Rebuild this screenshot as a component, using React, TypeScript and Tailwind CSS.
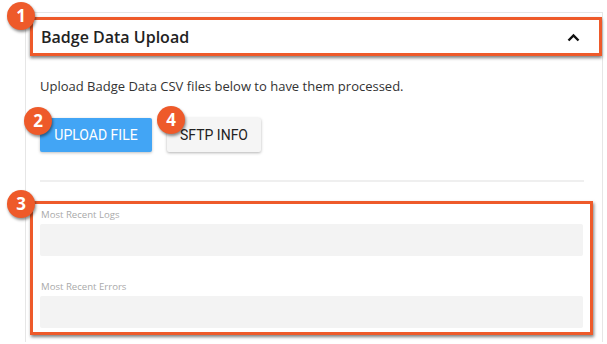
import React from 'react'

const Badge: React.FC<{ n: number; className: string }> = ({ n, className }) => (
  <div
    className={`absolute w-[28px] h-[28px] rounded-full bg-[#ee5a2a] text-white flex items-center justify-center text-[17px] font-bold shadow-[1px_2px_3px_rgba(0,0,0,0.45)] font-['Open_Sans',sans-serif] ${className}`}
  >
    {n}
  </div>
)

const LogField: React.FC<{ label: string; className?: string }> = ({ label, className }) => (
  <div className={className}>
    <div className="text-[9.6px] leading-[14px] text-[#aaaaaa] pl-[1px]">{label}</div>
    <div className="h-[32px] bg-[#f3f3f3] rounded-[2px] mt-[2px]" />
  </div>
)

export default function App() {
  return (
    <div className="relative w-[607px] h-[344px] bg-white overflow-hidden font-['Open_Sans',sans-serif]">
      <div className="ml-[25px] mt-[12px] w-[578px] h-[330px] border border-[#e6e6e6] border-b-0">
        {/* Header */}
        <div className="ml-[4px] mt-[4px] h-[39px] border-[3px] border-[#ee5a2a] shadow-[0_2px_3px_rgba(0,0,0,0.5)] flex items-center justify-between pl-[8px] pr-[19px]">
          <h1 className="text-[16px] font-semibold text-[#222]">Badge Data Upload</h1>
          <svg width="13" height="9" viewBox="0 0 13 9" className="mt-[1px]">
            <path d="M1.5 7.5 L6.5 2.5 L11.5 7.5" fill="none" stroke="#111" strokeWidth="2.4" />
          </svg>
        </div>

        <div className="pl-[14px] pr-[18px]">
          <p className="mt-[20px] text-[13px] leading-[20px] text-[#333]">
            Upload Badge Data CSV files below to have them processed.
          </p>

          <div className="mt-[22px] flex gap-[15px] font-['Roboto',sans-serif]">
            <button className="w-[112px] h-[34px] bg-[#42a5f5] text-white text-[14px] rounded-[2px] shadow-[0_1px_3px_rgba(0,0,0,0.25)]">
              UPLOAD FILE
            </button>
            <button className="w-[94px] h-[34px] bg-[#f5f5f5] text-[#222] text-[14px] rounded-[2px] shadow-[0_1px_3px_rgba(0,0,0,0.3)]">
              SFTP INFO
            </button>
          </div>

          <div className="mt-[28px] h-[2px] bg-[#efefef]" />
        </div>

        {/* Logs */}
        <div className="ml-[4px] mr-[9px] mt-[19px] h-[134px] border-[3px] border-[#ee5a2a] shadow-[1px_2px_3px_rgba(0,0,0,0.5)] px-[7px] pt-[4px]">
          <LogField label="Most Recent Logs" />
          <LogField label="Most Recent Errors" className="mt-[24px]" />
        </div>
      </div>

      <Badge n={1} className="left-[7px] top-[2px]" />
      <Badge n={2} className="left-[24px] top-[107px]" />
      <Badge n={4} className="left-[157px] top-[106px]" />
      <Badge n={3} className="left-[7px] top-[190px]" />
    </div>
  )
}
